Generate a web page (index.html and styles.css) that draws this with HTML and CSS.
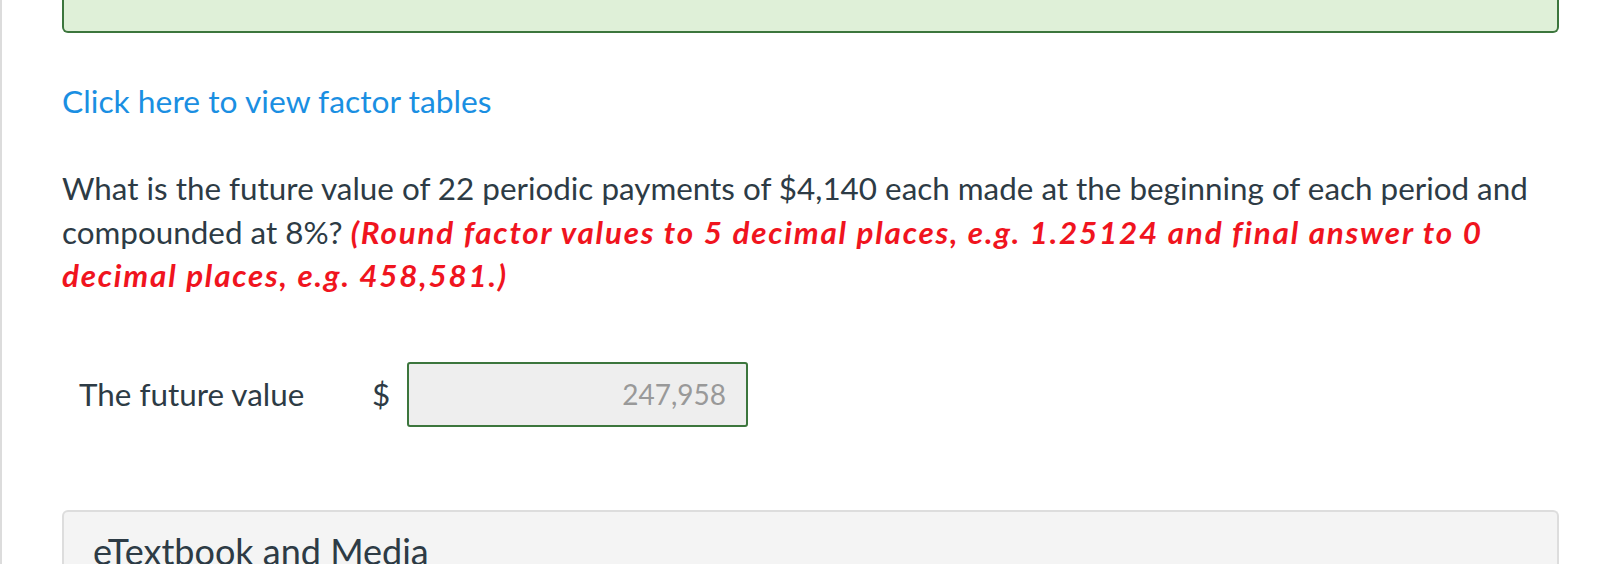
FILE: index.html
```html
<!DOCTYPE html>
<html lang="en">
<head>
  <meta charset="UTF-8" />
  <title>Question</title>
  <link rel="stylesheet" href="styles.css">
</head>
<body>
  <div class="page">
    <div class="feedback"></div>

    <p class="factor-link"><a href="#">Click here to view factor tables</a></p>

    <p class="question">
      What is the future value of 22 periodic payments of $4,140 each made at the beginning of each period and compounded at 8%?
      <em class="hint">(Round factor values to 5 decimal places, e.g. 1.25124 and final answer to 0 decimal places, e.g. 458,581.)</em>
    </p>

    <div class="answer-row">
      <span class="answer-label">The future value</span>
      <span class="currency">$</span>
      <input type="text" class="answer-input" value="247,958" readonly>
    </div>

    <div class="media-box">
      <div class="media-title">eTextbook and Media</div>
    </div>
  </div>
</body>
</html>
```

FILE: styles.css
```css
* {
  box-sizing: border-box;
}

body {
  margin: 0;
  background: #fff;
  font-family: Lato, 'Open Sans', sans-serif;
  color: #2d3b45;
  overflow: hidden;
}

.page {
  border-left: 2px solid #dcdcdc;
  min-height: 100vh;
  padding: 0 51px 0 60px;
}

.feedback {
  height: 33px;
  background: #dff0d8;
  border: 2px solid #3c763d;
  border-top: none;
  border-radius: 0 0 6px 6px;
}

.factor-link {
  margin: 46px 0 0;
  font-size: 31.8px;
  line-height: 44px;
}

.factor-link a {
  color: #1a8fe2;
  text-decoration: none;
}

.question {
  margin: 44px 0 0;
  font-size: 31.4px;
  line-height: 43.5px;
}

.hint {
  color: #f0141e;
  font-weight: bold;
  font-style: italic;
  letter-spacing: 1.8px;
}

.answer-row {
  display: flex;
  align-items: center;
  margin-top: 64px;
  padding-left: 17px;
}

.answer-label {
  width: 293px;
  font-size: 31.4px;
}

.currency {
  width: 35px;
  font-size: 31.4px;
}

.answer-input {
  width: 341px;
  height: 65px;
  border: 2px solid #3c763d;
  border-radius: 3px;
  background: #eeeeee;
  color: #999;
  font-family: Lato, 'Open Sans', sans-serif;
  font-size: 28px;
  text-align: right;
  padding: 0 20px;
}

.media-box {
  margin-top: 83px;
  background: #f4f4f4;
  border: 2px solid #dddddd;
  border-bottom: none;
  border-radius: 6px 6px 0 0;
  padding: 19px 29px;
  height: 80px;
}

.media-title {
  font-size: 36px;
  line-height: 40px;
}
```
